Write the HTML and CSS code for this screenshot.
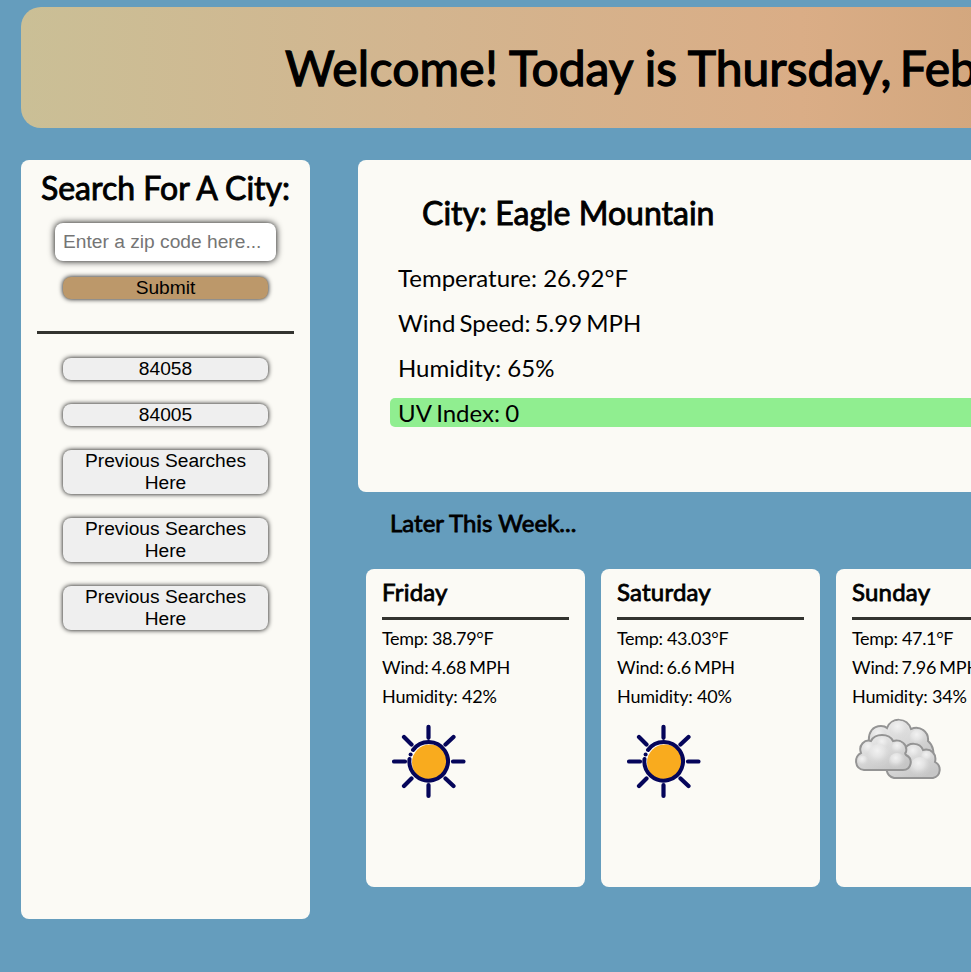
FILE: index.html
```html
<!DOCTYPE html>
<html lang="en">
<head>
<meta charset="utf-8">
<title>Weather Dashboard</title>
<link rel="stylesheet" href="styles.css">
</head>
<body>
<svg width="0" height="0" class="defs" aria-hidden="true">
  <defs>
    <radialGradient id="puff" cx=".42" cy=".3" r=".6">
      <stop offset="0" stop-color="#f2f2f2"/><stop offset=".5" stop-color="#e6e6e6" stop-opacity=".85"/><stop offset="1" stop-color="#d6d6d6" stop-opacity=".15"/>
    </radialGradient>
    <linearGradient id="cloud" x1="0" y1="0" x2=".6" y2="1">
      <stop offset="0" stop-color="#f0f0f0"/><stop offset="1" stop-color="#c6c6c6"/>
    </linearGradient>
    <symbol id="sun" viewBox="0 0 100 100">
      <circle cx="48.500" cy="51.500" r="19" fill="#fff"/>
      <circle cx="50" cy="52.500" r="18" fill="#f9ab1e"/>
      <path d="M33 40A19.300 19.300 0 1 1 29.500 49" fill="none" stroke="#05055a" stroke-width="4" stroke-linecap="round"/>
      <circle cx="30.600" cy="44.600" r="2" fill="#05055a"/>
      <path d="M48.500 16.800v11M48.500 75v11M14 51.500h11M73 51.500h10.500M24 27l7.500 7.500M73.500 27l-8 7.500M24 76l7.500-7.500M73.500 76l-8-7.500" fill="none" stroke="#05055a" stroke-width="4.200" stroke-linecap="round"/>
    </symbol>
    <symbol id="clouds" viewBox="0 0 110 90">
      <path d="M24 52C22 46 22 41 24 37C23 27 28 21 36 21C39 21 41 22 42 23C46 12 62 12 66 24C75 20 84 27 83 36C88 40 90 48 87 55L76 62Z" fill="url(#cloud)" stroke="#949494" stroke-width="2"/>
      <circle cx="54" cy="25" r="9.500" fill="url(#puff)"/><circle cx="34" cy="31" r="8" fill="url(#puff)"/><circle cx="73" cy="33" r="8.500" fill="url(#puff)"/>
      <path d="M49 73C41 71 39 61 45 57L60 44C63 37 75 37 78 45C86 43 92 49 90 57C97 61 96 71 88 73Z" fill="url(#cloud)" stroke="#949494" stroke-width="2"/>
      <circle cx="69" cy="48" r="7" fill="url(#puff)"/><circle cx="82" cy="52" r="6" fill="url(#puff)"/><circle cx="75" cy="62" r="10" fill="url(#puff)"/>
      <path d="M19 65C9 64 9 51 16 48C13 40 20 34 26 36C30 28 44 28 48 36C55 34 63 39 61 47C60 48 60 49 61 50C69 54 66 65 58 65Z" fill="url(#cloud)" stroke="#949494" stroke-width="2"/>
      <circle cx="38" cy="39" r="7" fill="url(#puff)"/><circle cx="24" cy="44" r="7" fill="url(#puff)"/><circle cx="53" cy="43" r="6.500" fill="url(#puff)"/><circle cx="34" cy="50" r="11" fill="url(#puff)"/><circle cx="52" cy="56" r="8" fill="url(#puff)"/><circle cx="18" cy="56" r="5.500" fill="url(#puff)"/>
    </symbol>
  </defs>
</svg>
<div class="page">
  <header class="banner"><h1><span class="greeting">Welcome!</span> Today is Thursday, <span class="month">Feb</span></h1></header>
  <div class="columns">
    <aside class="search">
      <h2>Search For A City:</h2>
      <input class="zip" type="text" placeholder="Enter a zip code here...">
      <button class="btn submit">Submit</button>
      <hr>
      <div class="history">
        <button class="btn">84058</button>
        <button class="btn">84005</button>
        <button class="btn">Previous Searches Here</button>
        <button class="btn">Previous Searches Here</button>
        <button class="btn">Previous Searches Here</button>
      </div>
    </aside>
    <main>
      <section class="current">
        <h2>City: Eagle Mountain</h2>
        <p>Temperature: 26.92°F</p>
        <p class="wind">Wind Speed: 5.99 MPH</p>
        <p>Humidity: 65%</p>
        <p class="uv">UV Index: 0</p>
      </section>
      <h3 class="later">Later This Week...</h3>
      <section class="forecast">
        <article class="card">
          <h3>Friday</h3>
          <p class="temp">Temp: 38.79°F</p><p class="wind">Wind: 4.68 MPH</p><p>Humidity: 42%</p>
          <svg class="sun"><use href="#sun"/></svg>
        </article>
        <article class="card">
          <h3>Saturday</h3>
          <p class="temp">Temp: 43.03°F</p><p class="wind">Wind: 6.6 MPH</p><p>Humidity: 40%</p>
          <svg class="sun"><use href="#sun"/></svg>
        </article>
        <article class="card">
          <h3>Sunday</h3>
          <p class="temp">Temp: 47.1°F</p><p class="wind">Wind: 7.96 MPH</p><p>Humidity: 34%</p>
          <svg class="clouds"><use href="#clouds"/></svg>
        </article>
      </section>
    </main>
  </div>
</div>
</body>
</html>
```
FILE: styles.css
```css
* { box-sizing: border-box; }
html { overflow: hidden; background: #659dbd; }
body { margin: 0; height: 972px; overflow: hidden; font-family: Lato, sans-serif; color: #000; }
.defs { position: absolute; }
.page { width: 1100px; padding: 7px 0 0 21px; }
h1, h2, h3 { margin: 0; font-weight: 400; white-space: nowrap; -webkit-text-stroke: .9px #000; }
p { margin: 0; white-space: nowrap; }
.banner {
  height: 121px; padding: 32px 0 0 264px; border-radius: 20px;
  background: linear-gradient(90deg, #cabf96 0, #d3b58f 400px, #daad86 780px, #d3a77e 960px);
}
h1 { font-size: 48px; line-height: 58px; -webkit-text-stroke-width: 1.300px; }
.greeting { letter-spacing: .25px; }
.month { margin-left: -4px; }
.columns { display: flex; gap: 48px; margin-top: 32px; align-items: flex-start; }
.search {
  width: 289px; height: 759px; padding: 9px 16px; border-radius: 8px; background: #fbfaf5;
  display: flex; flex-direction: column; align-items: center;
}
h2 { font-size: 32px; line-height: 38px; }
.zip {
  width: 221px; height: 38px; margin: 16px 0 0; padding: 0 8px; border: 0; border-radius: 8px;
  background: #fff; font: 19.200px "Liberation Sans", sans-serif; box-shadow: 0 0 7px #000;
}
.zip::placeholder { color: #757575; }
.btn {
  width: 205px; padding: 0 6px; border: 0; border-radius: 8px; background: #efefef; color: #000;
  font: 19.200px/22px "Liberation Sans", sans-serif; box-shadow: 0 0 5px #000;
}
.submit { margin-top: 16px; background: #bc986a; }
hr { width: 257px; height: 3px; margin: 32px 0 24px; border: 0; background: #33332f; }
.history { display: flex; flex-direction: column; gap: 24px; }
main { flex: 1; min-width: 0; }
.current { height: 332px; padding: 34px 32px 0; border-radius: 8px; background: #fbfaf5; }
.current h2 { margin: 0 0 31px 32px; }
.current p { height: 29px; margin-bottom: 16px; padding-left: 8px; border-radius: 5px; font-size: 24px; line-height: 29px; }
.current .wind { word-spacing: -2px; }
.current .uv { background: #90ee90; word-spacing: -1px; }
h3 { font-size: 24px; line-height: 29px; -webkit-text-stroke-width: .8px; }
.later { margin: 16px 0 32px 32px; }
.forecast { display: flex; gap: 16px; padding-left: 8px; }
.card { flex: none; width: 219px; height: 318px; padding: 8px 16px; border-radius: 8px; background: #fbfaf5; }
.card h3 { height: 43px; margin-bottom: 8px; border-bottom: 3px solid #33332f; letter-spacing: .2px; }
.card p { font-size: 18px; line-height: 21px; margin-bottom: 8px; letter-spacing: -.2px; }
.card .temp { letter-spacing: -.33px; }
.card .wind { letter-spacing: -.2px; word-spacing: -1.400px; }
.card svg { display: block; }
.sun { width: 100px; height: 100px; margin-top: -5px; margin-left: -2px; }
.clouds { width: 110px; height: 90px; margin: -10px 0 0 -7px; }
```
